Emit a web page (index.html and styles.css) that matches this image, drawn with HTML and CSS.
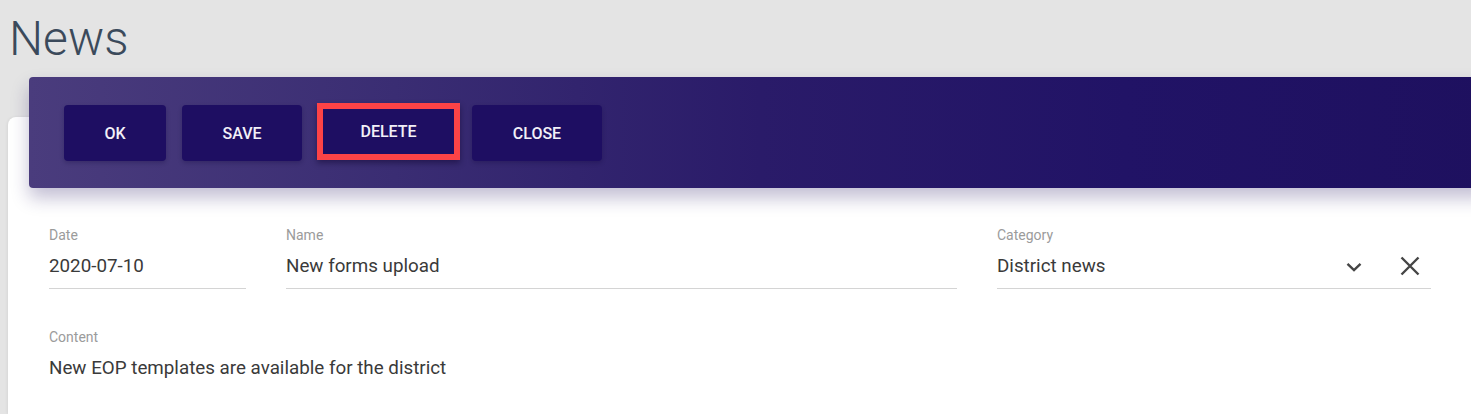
FILE: index.html
```html
<!DOCTYPE html>
<html>
<head>
<meta charset="utf-8">
<link rel="stylesheet" href="styles.css">
</head>
<body>
  <h1 class="title">News</h1>
  <div class="card">
    <div class="card-header">
      <button class="btn btn-ok">OK</button>
      <button class="btn btn-save">SAVE</button>
      <button class="btn btn-delete">DELETE</button>
      <button class="btn btn-close">CLOSE</button>
    </div>
    <div class="card-body">
      <div class="row">
        <div class="field">
          <div class="label">Date</div>
          <div class="value">2020-07-10</div>
        </div>
        <div class="field">
          <div class="label">Name</div>
          <div class="value">New forms upload</div>
        </div>
        <div class="field">
          <div class="label">Category</div>
          <div class="value select">
            <span class="select-text">District news</span>
            <svg class="chev" width="16" height="10" viewBox="0 0 16 10"><path d="M1.5 1.8 L8 8 L14.5 1.8" fill="none" stroke="#454545" stroke-width="2.4"/></svg>
            <svg class="clear" width="20" height="20" viewBox="0 0 20 20"><path d="M1.5 1.5 L18.5 18.5 M18.5 1.5 L1.5 18.5" fill="none" stroke="#454545" stroke-width="2.4"/></svg>
          </div>
        </div>
      </div>
      <div class="field content">
        <div class="label">Content</div>
        <div class="value plain">New EOP templates are available for the district</div>
      </div>
    </div>
  </div>
</body>
</html>
```

FILE: styles.css
```css
html, body {
  margin: 0;
  padding: 0;
  background: #e4e4e4;
  font-family: Roboto, "Liberation Sans", sans-serif;
  overflow: hidden;
}

.title {
  margin: 0;
  padding: 12px 0 0 9px;
  height: 53px;
  font-size: 48px;
  font-weight: 300;
  line-height: 53px;
  color: #3b4a5b;
}

.card {
  display: flow-root;
  margin: 52px -20px 0 8px;
  background: #fff;
  border-radius: 8px 0 0 0;
  height: 297px;
  box-shadow: -1px 0 3px rgba(0,0,0,0.06);
}

.card-header {
  margin: -40px 0 0 21px;
  height: 111px;
  border-radius: 4px 0 0 4px;
  background: linear-gradient(90deg, #4a3c7d 0%, #3a2d73 25%, #2a1b69 50%, #211366 75%, #1e105f 100%);
  box-shadow: 0 10px 18px rgba(40, 25, 100, 0.28);
  display: flex;
  align-items: flex-start;
  padding: 28px 0 0 35px;
  box-sizing: border-box;
}

.btn {
  height: 56px;
  border: none;
  border-radius: 4px;
  background: #1e0e62;
  color: #f2f0f8;
  font-family: Roboto, "Liberation Sans", sans-serif;
  font-weight: 500;
  font-size: 16px;
  padding: 0;
  margin-right: 16px;
  box-shadow: 0 2px 4px rgba(10, 0, 50, 0.25);
  cursor: pointer;
}

.btn-ok { width: 102px; }
.btn-save { width: 120px; }
.btn-delete {
  width: 143px;
  height: 57px;
  margin-top: -2px;
  margin-left: -1px;
  margin-right: 12px;
  border: 6px solid #fd4346;
  border-radius: 0;
  box-shadow: 0 3px 6px rgba(10, 0, 40, 0.45);
}
.btn-close { width: 130px; }

.card-body {
  padding: 39px 60px 0 41px;
}

.row {
  display: grid;
  grid-template-columns: 197px 671px 434px;
  column-gap: 40px;
}

.field {
  display: flex;
  flex-direction: column;
}

.label {
  font-size: 14px;
  line-height: 16px;
  color: #9b9b9b;
  height: 16px;
}

.value {
  margin-top: 8px;
  font-size: 18.8px;
  line-height: 30px;
  color: #3a3a3a;
  height: 30px;
  padding-bottom: 7px;
  border-bottom: 1px solid #d4d4d4;
}

.value.plain {
  border-bottom: none;
}

.select {
  display: flex;
  align-items: center;
}

.select-text {
  flex: 1;
}

.chev {
  margin-right: 38px;
  margin-top: 2px;
}

.clear {
  margin-right: 11px;
}

.content {
  margin-top: 40px;
}
```
